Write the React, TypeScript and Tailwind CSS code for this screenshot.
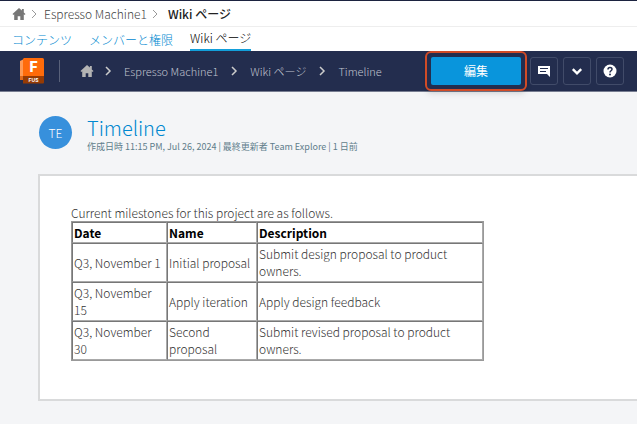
import React from "react";

const rows = [
  ["Q3, November 1", "Initial proposal", "Submit design proposal to product owners."],
  ["Q3, November 15", "Apply iteration", "Apply design feedback"],
  ["Q3, November 30", "Second proposal", "Submit revised proposal to product owners."],
];

function HomeIcon({ className }: { className: string }) {
  return (
    <svg viewBox="0 0 14 14" className={className} fill="currentColor" aria-hidden="true">
      <path d="M7 1 0.500 7l.8.9.9-.7V13h3.500V9.200h2.600V13h3.500V7.200l.9.7.8-.9-1.700-1.600V2H9.900v1.600z" />
    </svg>
  );
}

function Chevron({ className, down = false }: { className: string; down?: boolean }) {
  return (
    <svg viewBox="0 0 10 10" className={className} fill="none" stroke="currentColor" aria-hidden="true">
      <path d={down ? "M1.5 3.5 5 7l3.5-3.5" : "M3 1l4 4-4 4"} />
    </svg>
  );
}

function FusionLogo() {
  return (
    <svg viewBox="0 0 24 26" className="h-[26px] w-6 shrink-0" role="img" aria-label="Fusion">
      <path d="M0 3 4 1v20l-4 1z" fill="#ff9a55" />
      <path d="M4 0h18.500q1.500 0 1.500 1.500V18H3V1z" fill="#ff6b0a" />
      <path d="M0 18h3v4H0z" fill="#e0691b" />
      <path d="M3 18h21v6.500q0 1-1 1H3z" fill="#963b04" />
      <text x="13.500" y="14" textAnchor="middle" fontSize="14" fontWeight="800" fill="#fff" fontFamily="Inter, sans-serif">F</text>
      <text x="13.500" y="24" textAnchor="middle" fontSize="5" fontWeight="700" fill="#fff" fontFamily="Inter, sans-serif">FUS</text>
    </svg>
  );
}

const toolButton =
  "flex h-7 w-7 shrink-0 items-center justify-center rounded-[3px] border border-[#414b69] text-white";

const cellStyle = "border border-t-[#777] border-l-[#777] border-r-[#aaa] border-b-[#aaa] px-px pt-px";

export default function App() {
  return (
    <div className="min-h-screen bg-[#f4f5f7] font-['Noto_Sans_CJK_JP',sans-serif] text-xs text-[#666]">
      <header className="border-t border-[#1c2340] bg-white">
        <nav aria-label="Project" className="flex h-[26px] items-center border-b border-[#eeeeee] pl-3 text-xs text-[#444]">
          <a href="#home" aria-label="Home"><HomeIcon className="h-[14px] w-[14px] text-[#777]" /></a>
          <Chevron className="ml-[3px] h-[10px] w-[10px] text-[#999]" />
          <a href="#project" className="ml-[5px] font-light">Espresso Machine1</a>
          <Chevron className="ml-[3px] h-[10px] w-[10px] text-[#999]" />
          <a href="#wiki" className="ml-2 font-medium text-[#222]">Wiki ページ</a>
        </nav>
        <nav aria-label="Sections" className="flex h-6 items-stretch gap-[17px] pl-3 text-xs font-light leading-[26px] text-[#0088d0]">
          <a href="#contents">コンテンツ</a>
          <a href="#members">メンバーと権限</a>
          <a href="#wiki" className="border-b-2 border-[#139fda] leading-[22px] text-black">Wiki ページ</a>
        </nav>
      </header>

      <div className="flex h-[41px] items-center border-b border-[#777d91] bg-[#232d4e] pl-5 pr-[13px] text-[11px] font-light text-[#c0c4ce]">
        <FusionLogo />
        <div className="ml-[15px] mr-[14px] h-[22px] w-px bg-[#59617a]" />
        <nav aria-label="Page" className="flex flex-1 items-center pl-[6px] whitespace-nowrap">
          <a href="#home" aria-label="Home"><HomeIcon className="h-[14px] w-[14px] text-[#b4b4b4]" /></a>
          <Chevron className="ml-[9px] h-[10px] w-[10px] stroke-[1.5] text-[#ccc]" />
          <a href="#project" className="ml-[11px]">Espresso Machine1</a>
          <Chevron className="ml-[11px] h-[10px] w-[10px] stroke-[1.5] text-[#ccc]" />
          <a href="#wiki" className="ml-[11px]">Wiki ページ</a>
          <Chevron className="ml-[11px] h-[10px] w-[10px] stroke-[1.5] text-[#ccc]" />
          <a href="#timeline" className="ml-[11px]">Timeline</a>
        </nav>
        <div className="flex items-center gap-[5px]">
          <div className="-mr-[2px] h-10 rounded-md border-2 border-[#d14b26] p-1 shadow-md">
            <button className="h-7 w-[90px] rounded-[2px] bg-[#0995dc] text-xs font-normal text-white">編集</button>
          </div>
          <button aria-label="Comments" className={toolButton}>
            <svg viewBox="0 0 14 14" className="h-[14px] w-[14px]" aria-hidden="true">
              <path d="M1 2h12v11l-3-3H1z" fill="#fff" />
              <path d="M3 4.500h8M3 7.500h6" stroke="#232d4e" />
            </svg>
          </button>
          <button aria-label="More" className={toolButton}>
            <Chevron down className="h-3 w-3 stroke-2" />
          </button>
          <button aria-label="Help" className={toolButton}>
            <svg viewBox="0 0 14 14" className="h-[14px] w-[14px]" aria-hidden="true">
              <circle cx="7" cy="7" r="6.500" fill="#fff" />
              <path d="M5 5.500C5 2.800 9 2.900 9 5.300 9 6.800 7 6.800 7 8.500" fill="none" stroke="#232d4e" strokeWidth="1.500" />
              <circle cx="7" cy="10.500" r="1" fill="#232d4e" />
            </svg>
          </button>
        </div>
      </div>

      <main className="pl-[38px] pb-6">
        <section className="flex h-[82px] items-start pt-6">
          <div className="ml-px flex h-[33px] w-[33px] shrink-0 items-center justify-center rounded-full bg-[#3790dc] text-xs font-light text-white">TE</div>
          <div className="ml-[15px]">
            <h1 className="text-xl font-light leading-6 text-[#0088d0]">Timeline</h1>
            <p className="text-[9px] leading-[14px] text-[#607d8b]">作成日時 11:15 PM, Jul 26, 2024 | 最終更新者 Team Explore | 1 日前</p>
          </div>
        </section>
        <article className="border-2 border-r-0 border-[#d9dadb] bg-white px-[31px] pt-7 pb-[38px] text-xs font-light leading-[17px] text-[#333]">
          <p>Current milestones for this project are as follows.</p>
          <table className="w-[413px] table-fixed border-separate border-spacing-0 border border-[#999] text-left">
            <thead className="font-bold text-black">
              <tr>
                <th className={`w-[95px] pb-px ${cellStyle}`}>Date</th>
                <th className={`w-[90px] pb-px ${cellStyle}`}>Name</th>
                <th className={`pb-px ${cellStyle}`}>Description</th>
              </tr>
            </thead>
            <tbody>
              {rows.map((row) => (
                <tr key={row[0]}>
                  {row.map((cell) => (
                    <td key={cell} className={`pb-[2px] ${cellStyle}`}>{cell}</td>
                  ))}
                </tr>
              ))}
            </tbody>
          </table>
        </article>
      </main>
    </div>
  );
}
